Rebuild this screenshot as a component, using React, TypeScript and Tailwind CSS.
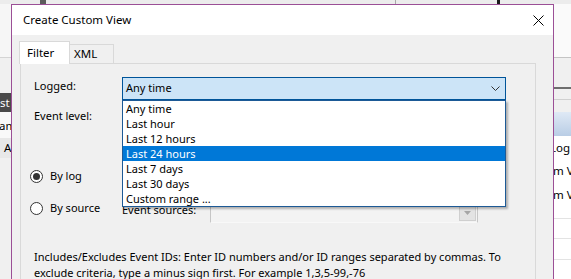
import React from "react";

const items = [
  "Any time",
  "Last hour",
  "Last 12 hours",
  "Last 24 hours",
  "Last 7 days",
  "Last 30 days",
  "Custom range ...",
];

function TopStrip() {
  return (
    <div className="h-[4px] flex bg-[#ececec] shrink-0">
      <div className="w-[40px]" />
      <div className="w-[6px] bg-[#5b5b5b]" />
      <div className="w-[349px]" />
      <div className="w-[1px] bg-[#a8a8a8]" />
      <div className="w-[101px]" />
      <div className="w-[3px] bg-[#1a1a1a]" />
    </div>
  );
}

function LeftStrip() {
  return (
    <div className="flex flex-col w-[11px] overflow-hidden shrink-0">
      <div className="h-[53px] bg-[#f6f6f6]" />
      <div className="h-[1px] bg-[#d4d4d4]" />
      <div className="h-[35px] bg-[#f0f0f0]" />
      <div className="h-[19px] bg-[#4a4a4a] text-white leading-[19px] whitespace-nowrap">st</div>
      <div className="h-[26px] bg-[#f9f9f9] leading-[28px] whitespace-nowrap -ml-[1px]">am</div>
      <div className="h-[20px] bg-[#e8e8e8] leading-[20px] pl-[4px]">A</div>
      <div className="flex-1 bg-[#f0f0f0]" />
    </div>
  );
}

function RightStrip() {
  return (
    <div className="flex flex-col w-[17px] overflow-hidden shrink-0">
      <div className="h-[53px] bg-[#fafafa]" />
      <div className="h-[1px] bg-[#c4c4c4]" />
      <div className="h-[29px] bg-[#f0f0f0]" />
      <div className="h-[2px] bg-[#6e6e6e]" />
      <div className="h-[10px] bg-[#f0f0f0]" />
      <div className="h-[1px] bg-[#d0d0d0]" />
      <div className="h-[12px] bg-[#f0f0f0]" />
      <div className="h-[24px] bg-gradient-to-b from-[#dfe9f5] to-[#b9cde5]" />
      <div className="flex-1 bg-white flex flex-col whitespace-nowrap">
        <div className="h-[24px] leading-[24px] -ml-[4px]">Log</div>
        <div className="h-[22px] leading-[22px] -ml-[1px]">m Vi</div>
        <div className="h-[25px] leading-[25px] -ml-[1px]">m Vi</div>
        <div className="h-[11px]" />
        <div className="h-[1px] bg-[#e3e3e3]" />
        <div className="h-[19px]" />
        <div className="h-[1px] bg-[#e3e3e3]" />
        <div className="h-[20px]" />
        <div className="h-[1px] bg-[#e3e3e3]" />
        <div className="flex-1" />
      </div>
    </div>
  );
}

function Radio({ checked }: { checked?: boolean }) {
  return (
    <div className="w-[13px] h-[13px] rounded-full border border-[#333333] bg-white flex items-center justify-center shrink-0">
      {checked && <div className="w-[7px] h-[7px] rounded-full bg-[#333333]" />}
    </div>
  );
}

export default function App() {
  return (
    <div className="relative w-[571px] h-[279px] overflow-hidden bg-[#f0f0f0] font-['Noto_Sans',sans-serif] text-[11px] text-black">
      <div className="absolute inset-0 flex flex-col text-[11.5px]">
        <TopStrip />
        <div className="flex-1 flex justify-between">
          <LeftStrip />
          <RightStrip />
        </div>
      </div>

      <div className="absolute left-[11px] top-[4px] w-[543px] h-[290px] border border-[#9b4f96] bg-[#f0f0f0] flex flex-col">
        <div className="h-[30px] bg-white flex items-center justify-between pl-[11px] pr-[9px] shrink-0">
          <span className="leading-[16px] text-[11.5px]">Create Custom View</span>
          <svg width="11" height="11" viewBox="0 0 11 11" className="block">
            <path d="M0.5 0.5L10.5 10.5M10.5 0.5L0.5 10.5" stroke="#000" strokeWidth="1" fill="none" />
          </svg>
        </div>

        <div className="pl-[8px] pt-[6px] flex flex-col">
          <div className="flex items-end h-[22px]">
            <div className="relative z-10 -ml-[1px] mb-[-1px] h-[23px] w-[51px] bg-white border border-b-0 border-[#d9d9d9] flex items-center pl-[7px] text-[11.5px]">
              Filter
            </div>
            <div className="h-[19px] w-[44px] bg-[#f0f0f0] border-t border-r border-[#d9d9d9] flex items-center pl-[4px] text-[11.5px]">
              XML
            </div>
          </div>

          <div className="w-[516px] h-[300px] border border-[#d9d9d9] bg-[#f0f0f0] pl-[13px] pt-[13px] flex flex-col">
            <div className="flex items-start h-[23px]">
              <div className="w-[88px] mt-[1px] leading-[15px]">Logged:</div>
              <div className="relative w-[384px] h-[23px]">
                <div className="h-full border border-[#005499] bg-[#cce4f7] flex items-center justify-between pl-[3px] pr-[5px]">
                  <span>Any time</span>
                  <svg width="9" height="5" viewBox="0 0 9 5" className="block">
                    <path d="M0.5 0.5L4.5 4.5L8.5 0.5" stroke="#333" strokeWidth="1" fill="none" />
                  </svg>
                </div>
                <div className="absolute left-0 top-[23px] w-[384px] bg-white border border-[#1d5a96] shadow-[2px_2px_2px_rgba(0,0,0,0.28)] z-20">
                  {items.map((it, i) => (
                    <div
                      key={it}
                      className={
                        i === 3
                          ? "h-[15px] leading-[15px] pl-[3px] bg-[#0078d7] text-white whitespace-nowrap"
                          : "h-[15px] leading-[15px] pl-[3px] whitespace-nowrap"
                      }
                    >
                      {it}
                    </div>
                  ))}
                </div>
              </div>
            </div>

            <div className="mt-[8px] h-[15px] leading-[15px]">Event level:</div>

            <div className="mt-[45px] h-[16px] flex items-center gap-[7px] -ml-[4px]">
              <Radio checked />
              <span>By log</span>
            </div>

            <div className="mt-[16px] flex items-start h-[23px]">
              <div className="w-[92px] h-[16px] flex items-center gap-[7px] -ml-[4px]">
                <Radio />
                <span className="whitespace-nowrap">By source</span>
              </div>
              <div className="w-[88px] mt-[2px] leading-[16px] whitespace-nowrap">Event sources:</div>
              <div className="w-[268px] h-[23px] border border-[#c6c6c6] border-b-[#f8f8f8] bg-[#f3f3f3] flex items-end justify-end pr-[1px] pb-[1px]">
                <div className="w-[17px] h-[16px] bg-[#e3e3e3] border border-[#cfcfcf] flex items-center justify-center">
                  <svg width="7" height="4" viewBox="0 0 7 4" className="block">
                    <path d="M0 0H7L3.5 4Z" fill="#a6a6a6" />
                  </svg>
                </div>
              </div>
            </div>

            <div className="mt-[26px] leading-[16px] whitespace-nowrap">
              Includes/Excludes Event IDs: Enter ID numbers and/or ID ranges separated by commas. To
              <br />
              exclude criteria, type a minus sign first. For example 1,3,5-99,-76
            </div>
          </div>
        </div>
      </div>
    </div>
  );
}
